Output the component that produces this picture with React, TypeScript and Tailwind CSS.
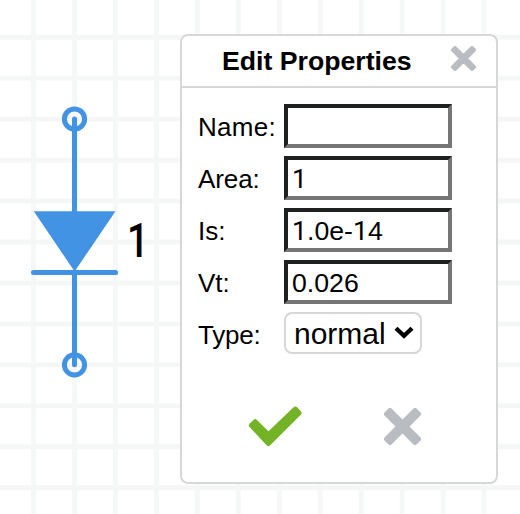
import React from "react";

const BLUE = "#4293e3";
const STEP = 40.96;

function Grid() {
  const lines = Array.from({ length: 13 }, (_, i) => i);
  return (
    <g strokeWidth="4.9">
      {lines.map((i) => (
        <path key={"v" + i} stroke="#f6f7f7" d={`M${33.5 + i * STEP} 0V514`} />
      ))}
      {lines.map((i) => (
        <path key={"h" + i} stroke="#f5f7f7" d={`M0 ${37.2 + i * STEP}H520`} />
      ))}
    </g>
  );
}

function Diode() {
  return (
    <g stroke={BLUE} strokeWidth="5" strokeLinecap="round" fill="none">
      <circle cx="74.5" cy="119" r="10.1" />
      <circle cx="74.5" cy="364.8" r="10.1" />
      <path d="M74.5 119V212M74.5 273V364.8M33.5 272.6H115.6" />
      <path d="M33.8 211.2H115.5L74.6 271.5Z" fill={BLUE} stroke="none" />
    </g>
  );
}

function Cross({ className }: { className: string }) {
  return (
    <svg viewBox="0 0 37 37" className={className} fill="#b9bdc2" stroke="#b9bdc2">
      <path
        strokeWidth="5"
        strokeLinejoin="round"
        d="M6 2.5L18.5 14.9L31 2.5L34.5 6L22.1 18.5L34.5 31L31 34.5L18.5 22.1L6 34.5L2.5 31L14.9 18.5L2.5 6Z"
      />
    </svg>
  );
}

function Value({ text }: { text: string }) {
  return (
    <>
      {text.split("").map((c, i) => (
        <span key={i} className={c === "1" ? "font-['Roboto',sans-serif]" : ""}>
          {c}
        </span>
      ))}
    </>
  );
}

function Field({ label, value, labelClass = "" }: { label: string; value: string; labelClass?: string }) {
  return (
    <div className="flex h-11 items-center">
      <label className={"w-[86px] pt-0.5 text-[26px] leading-[30px] " + labelClass}>{label}</label>
      <div
        role="textbox"
        aria-label={label}
        className="h-11 w-[168px] border-4 border-t-[#1f2020] border-r-[#767676] border-b-[#767676] border-l-[#1f2020] bg-white pt-[4px] pl-1 text-[26.67px] leading-[30px] whitespace-nowrap"
      >
        <Value text={value} />
      </div>
    </div>
  );
}

export default function App() {
  return (
    <main className="relative h-[514px] w-[520px] overflow-hidden bg-white font-['Liberation_Sans',Arial,sans-serif] text-black">
      <svg className="absolute inset-0" width="520" height="514" viewBox="0 0 520 514">
        <Grid />
        <Diode />
      </svg>
      <span className="absolute top-[213px] left-[127px] origin-left scale-x-[0.8] font-['Roboto',sans-serif] text-[48px] leading-[56px] font-medium">1</span>

      <section className="absolute top-[34px] left-[180px] flex h-[450px] w-[318px] flex-col rounded-lg border-2 border-[#d6d7d8] bg-white">
        <header className="flex h-[52px] shrink-0 items-start border-b-2 border-[#d6d7d8] pt-2.5 pl-10">
          <h1 className="w-[229px] text-[26.67px] leading-[30px] font-bold whitespace-nowrap">Edit Properties</h1>
          <button aria-label="Close">
            <Cross className="block h-[25px] w-[25px]" />
          </button>
        </header>
        <div className="flex flex-col gap-2 pt-4 pl-4">
          <Field label="Name:" value="" labelClass="tracking-[0.3px]" />
          <Field label="Area:" value="1" labelClass="tracking-[-0.1px]" />
          <Field label="Is:" value="1.0e-14" />
          <Field label="Vt:" value="0.026" />
          <div className="flex h-[42px] items-center">
            <label className="w-[86px] pt-1 text-[26px] leading-[30px] tracking-[-0.2px]">Type:</label>
            <button className="flex h-[42px] w-[138px] items-center rounded-lg border-2 border-[#d6d7d8] bg-white pl-2 text-[30px] leading-[34px]">
              <span className="w-[100px] pt-0.5 text-left">normal</span>
              <svg viewBox="0 0 20 14" className="h-[14px] w-5 shrink-0" fill="none" stroke="#000" strokeWidth="4.2">
                <path d="M2 2.2L10 9.8L18 2.2" />
              </svg>
            </button>
          </div>
        </div>
        <footer className="flex items-center pt-[52px] pl-[66px]">
          <button aria-label="Apply" className="w-[136px]">
            <svg viewBox="0 0 54 41" className="block h-[41px] w-[54px]" fill="#73b325" stroke="#73b325">
              <path
                strokeWidth="5"
                strokeLinejoin="round"
                d="M3.4 19.4L7.2 15.7L20.4 28.7L47.3 3.1L51 6.9L20.4 37.5Z"
              />
            </svg>
          </button>
          <button aria-label="Cancel">
            <Cross className="block h-[37px] w-[37px]" />
          </button>
        </footer>
      </section>
    </main>
  );
}
